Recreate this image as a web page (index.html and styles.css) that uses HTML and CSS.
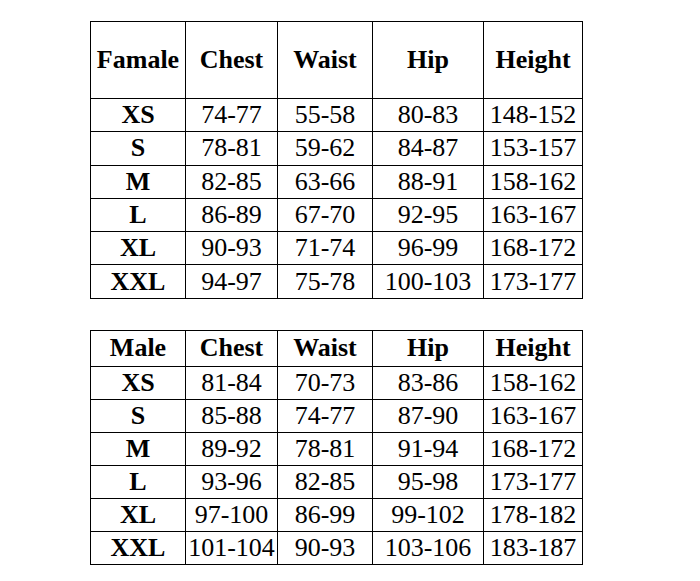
FILE: index.html
```html
<!DOCTYPE html>
<html>
<head>
<meta charset="utf-8">
<link rel="stylesheet" href="styles.css">
</head>
<body>
<div class="page">
  <table class="size-table first">
    <colgroup><col class="c1"><col class="c2"><col class="c3"><col class="c4"><col class="c5"></colgroup>
    <tr class="head tall"><th>Famale</th><th>Chest</th><th>Waist</th><th>Hip</th><th>Height</th></tr>
    <tr><th>XS</th><td>74-77</td><td>55-58</td><td>80-83</td><td>148-152</td></tr>
    <tr><th>S</th><td>78-81</td><td>59-62</td><td>84-87</td><td>153-157</td></tr>
    <tr><th>M</th><td>82-85</td><td>63-66</td><td>88-91</td><td>158-162</td></tr>
    <tr><th>L</th><td>86-89</td><td>67-70</td><td>92-95</td><td>163-167</td></tr>
    <tr><th>XL</th><td>90-93</td><td>71-74</td><td>96-99</td><td>168-172</td></tr>
    <tr><th>XXL</th><td>94-97</td><td>75-78</td><td>100-103</td><td>173-177</td></tr>
  </table>
  <table class="size-table second">
    <colgroup><col class="c1"><col class="c2"><col class="c3"><col class="c4"><col class="c5"></colgroup>
    <tr class="head"><th>Male</th><th>Chest</th><th>Waist</th><th>Hip</th><th>Height</th></tr>
    <tr><th>XS</th><td>81-84</td><td>70-73</td><td>83-86</td><td>158-162</td></tr>
    <tr><th>S</th><td>85-88</td><td>74-77</td><td>87-90</td><td>163-167</td></tr>
    <tr><th>M</th><td>89-92</td><td>78-81</td><td>91-94</td><td>168-172</td></tr>
    <tr><th>L</th><td>93-96</td><td>82-85</td><td>95-98</td><td>173-177</td></tr>
    <tr><th>XL</th><td>97-100</td><td>86-99</td><td>99-102</td><td>178-182</td></tr>
    <tr><th>XXL</th><td>101-104</td><td>90-93</td><td>103-106</td><td>183-187</td></tr>
  </table>
</div>
</body>
</html>
```
FILE: styles.css
```css
html, body {
  margin: 0;
  padding: 0;
  background: #ffffff;
}
.page {
  padding: 21px 0 0 90px;
  display: flex;
  flex-direction: column;
  gap: 31px;
}
.size-table {
  border-collapse: collapse;
  table-layout: fixed;
  width: 493px;
  font-family: "Liberation Serif", "Times New Roman", serif;
  font-size: 26px;
  color: #000;
}
.size-table col.c1 { width: 95px; }
.size-table col.c2 { width: 92px; }
.size-table col.c3 { width: 95px; }
.size-table col.c4 { width: 111px; }
.size-table col.c5 { width: 99px; }
.size-table th,
.size-table td {
  border: 1.5px solid #000;
  padding: 0;
  text-align: center;
  vertical-align: middle;
  height: 32px;
  line-height: 28px;
  white-space: nowrap;
}
.size-table.first th,
.size-table.first td { height: 32.3px; }
.size-table th { font-weight: bold; }
.size-table td { font-weight: normal; }
.size-table.first tr.tall th { height: 76px; }
.size-table.second tr.head th { height: 35px; }
```
